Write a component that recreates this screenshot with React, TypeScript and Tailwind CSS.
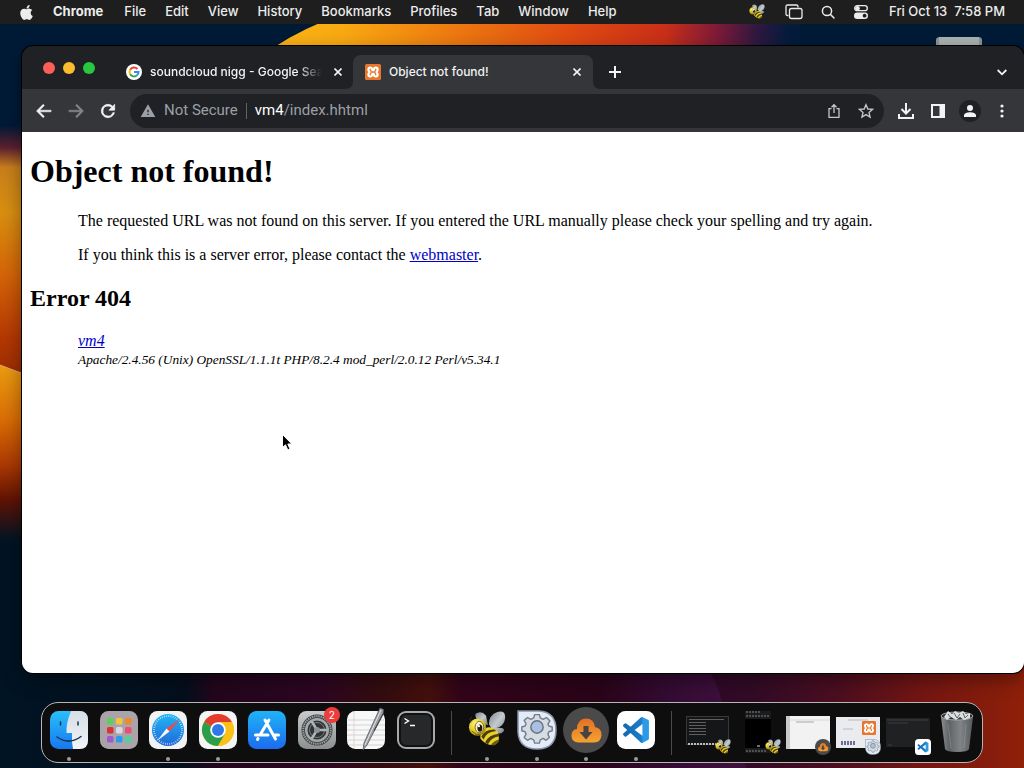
import React from "react";

const UI = "font-['Inter','Liberation_Sans',sans-serif]";

function Wallpaper() {
  return (
    <svg className="absolute inset-0 h-full w-full" viewBox="0 0 1024 768" preserveAspectRatio="none" aria-hidden="true">
      <defs>
        <linearGradient id="top" x1="270" x2="790" y1="0" y2="0" gradientUnits="userSpaceOnUse">
          <stop offset="0" stopColor="#fdb515" />
          <stop offset="0.14" stopColor="#f9a912" />
          <stop offset="0.35" stopColor="#ee7a10" />
          <stop offset="0.58" stopColor="#e04a12" />
          <stop offset="0.76" stopColor="#c92f18" />
          <stop offset="0.86" stopColor="#7e1a38" />
          <stop offset="0.94" stopColor="#2c1840" />
          <stop offset="1" stopColor="#031c3c" />
        </linearGradient>
        <linearGradient id="left" x1="0" x2="0" y1="125" y2="375" gradientUnits="userSpaceOnUse">
          <stop offset="0" stopColor="#001a36" />
          <stop offset="0.09" stopColor="#5c2030" />
          <stop offset="0.17" stopColor="#c87f1c" />
          <stop offset="0.35" stopColor="#d88f10" />
          <stop offset="0.6" stopColor="#d46408" />
          <stop offset="0.85" stopColor="#b53803" />
          <stop offset="1" stopColor="#9a2c02" />
        </linearGradient>
        <linearGradient id="leftLow" x1="0" x2="0" y1="365" y2="545" gradientUnits="userSpaceOnUse">
          <stop offset="0" stopColor="#eb9c10" />
          <stop offset="0.3" stopColor="#da6e06" />
          <stop offset="0.55" stopColor="#ad3a03" />
          <stop offset="0.75" stopColor="#601304" />
          <stop offset="0.95" stopColor="#0a1420" />
          <stop offset="1" stopColor="#001423" />
        </linearGradient>
        <linearGradient id="bottom" x1="0" x2="1024" y1="0" y2="0" gradientUnits="userSpaceOnUse">
          <stop offset="0" stopColor="#001423" />
          <stop offset="0.18" stopColor="#040f1c" />
          <stop offset="0.21" stopColor="#23061c" />
          <stop offset="0.31" stopColor="#2c0622" />
          <stop offset="0.37" stopColor="#330c10" />
          <stop offset="0.42" stopColor="#43100c" />
          <stop offset="0.45" stopColor="#32041a" />
          <stop offset="0.58" stopColor="#2a0418" />
          <stop offset="0.66" stopColor="#2a0828" />
          <stop offset="0.74" stopColor="#330b26" />
          <stop offset="0.82" stopColor="#4c0e20" />
          <stop offset="0.9" stopColor="#741612" />
          <stop offset="1" stopColor="#8f2009" />
        </linearGradient>
        <linearGradient id="petal" x1="600" x2="722" y1="0" y2="0" gradientUnits="userSpaceOnUse">
          <stop offset="0" stopColor="#4a1550" stopOpacity="0" />
          <stop offset="1" stopColor="#4a1550" stopOpacity=".5" />
        </linearGradient>
      </defs>
      <rect width="1024" height="768" fill="#001a36" />
      <path d="M262 56Q288 36 322 22H800V56Z" fill="url(#top)" />
      <rect y="125" width="40" height="255" fill="url(#left)" />
      <path d="M0 365L22 373L40 380V545H0Z" fill="url(#leftLow)" />
      <path d="M0 365L22 373.500" stroke="#e6a070" strokeWidth="1" />
      <rect y="545" width="1024" height="223" fill="url(#bottom)" />
      <path d="M600 660H700Q718 680 722 702Q740 730 746 768H600Z" fill="url(#petal)" />
      <path d="M936 50V40Q936 37 940 37H978Q982 37 982 40V50Z" fill="#8d9698" />
      <path d="M939 46V37H979V46Z" fill="#aab3b2" />
    </svg>
  );
}

function Bee() {
  return (
    <svg viewBox="0 0 40 40" className="h-full w-full" aria-hidden="true">
      <defs>
        <linearGradient id="wing" x1="0" x2="1" y1="0" y2="1">
          <stop offset="0" stopColor="#7b8489" />
          <stop offset=".5" stopColor="#c3cbd0" />
          <stop offset="1" stopColor="#788086" />
        </linearGradient>
        <radialGradient id="beeHead" cx=".4" cy=".3" r=".7">
          <stop offset="0" stopColor="#fff58a" />
          <stop offset=".6" stopColor="#e6cc22" />
          <stop offset="1" stopColor="#a18812" />
        </radialGradient>
      </defs>
      <path d="M8 3Q14 -1 19 5L21 15L13 12Q7 8 8 3Z" fill="url(#wing)" />
      <path d="M22 14Q22 4 31 1Q40 -1 39 8Q38 16 30 18Q37 17 38 20Q36 26 27 22Z" fill="url(#wing)" />
      <path d="M13 22Q22 13 31 21Q35 31 29 35Q20 38 13 29Z" fill="#ecd02a" />
      <path d="M14 27Q18 19 28 19.500L29.500 21Q19 22 16.500 30ZM18 33Q22 25 32 24L32.800 26.500Q24 28 21 35Z" fill="#4a3f0c" />
      <path d="M24 36Q27 31 33 30L32 33L28 36Z" fill="#6d5c10" />
      <circle cx="10" cy="17" r="9" fill="url(#beeHead)" />
      <ellipse cx="12" cy="17" rx="4.500" ry="6" fill="#f8f5df" stroke="#7a6717" />
      <ellipse cx="12.500" cy="18" rx="2.600" ry="3.800" fill="#211804" />
      <circle cx="11.500" cy="16" r="1.200" fill="#fff" />
      <path d="M4 21Q8 26 13 25" fill="none" stroke="#75600a" />
      <path d="M3 12Q1 8 4 6" fill="none" stroke="#3a3208" />
    </svg>
  );
}

function Xampp() {
  return (
    <svg viewBox="0 0 16 16" className="h-full w-full" aria-hidden="true">
      <rect width="16" height="16" rx="1.500" fill="#e8762c" />
      <g fill="#fff">
        <circle cx="5.200" cy="5.400" r="2.900" />
        <circle cx="10.800" cy="5.400" r="2.900" />
        <circle cx="5.200" cy="10.600" r="2.900" />
        <circle cx="10.800" cy="10.600" r="2.900" />
        <rect x="4" y="6.200" width="8" height="3.600" />
      </g>
      <path d="M5.300 5.200V6.200L6.500 8L5.300 9.800V10.800M10.700 5.200V6.200L9.500 8L10.700 9.800V10.800M6.500 8H9.500" fill="none" stroke="#e8762c" strokeWidth="1.300" strokeLinecap="round" />
    </svg>
  );
}

function GoogleG() {
  return (
    <svg viewBox="0 0 16 16" className="size-4 shrink-0" aria-hidden="true">
      <circle cx="8" cy="8" r="8" fill="#fff" />
      <g fill="none" strokeWidth="2">
        <path d="M11.400 5A4.500 4.500 0 0 0 4.200 5.700" stroke="#ea4335" />
        <path d="M4.200 5.700A4.500 4.500 0 0 0 4.200 10.300" stroke="#fbbc05" />
        <path d="M4.200 10.300A4.500 4.500 0 0 0 11 11.300" stroke="#34a853" />
        <path d="M11 11.300A4.500 4.500 0 0 0 12.500 8H8" stroke="#4285f4" />
      </g>
    </svg>
  );
}

const MENUS = ["File", "Edit", "View", "History", "Bookmarks", "Profiles", "Tab", "Window", "Help"];

function MenuBar() {
  return (
    <header className={`relative flex h-6 shrink-0 items-center justify-between bg-[#1e1e1e] pr-[19px] pl-5 text-[13px] font-medium text-[#ececec] ${UI}`}>
      <nav aria-label="Menu bar" className="flex items-center gap-[19px] whitespace-nowrap">
        <button aria-label="Apple menu" className="h-[17px] w-3">
          <svg viewBox="0 0 384 512" className="h-[17px] w-[13px]" fill="currentColor" aria-hidden="true">
            <path d="M318.700 268.700c-.2-36.700 16.400-64.400 50-84.800-18.800-26.900-47.200-41.700-84.700-44.600-35.500-2.800-74.300 20.700-88.500 20.700-15 0-49.400-19.700-76.400-19.700C63.300 141.200 4 184.800 4 273.500q0 39.300 14.400 81.200c12.800 36.700 59 126.700 107.200 125.200 25.200-.6 43-17.900 75.800-17.900 31.800 0 48.300 17.900 76.400 17.900 48.600-.7 90.400-82.500 102.600-119.300-65.200-30.700-61.700-90-61.700-91.900zm-56.600-164.200c27.300-32.400 24.800-61.900 24-72.500-24.100 1.400-52 16.400-67.900 34.900-17.500 19.800-27.800 44.300-25.600 71.900 26.100 2 49.900-11.400 69.500-34.300z" />
          </svg>
        </button>
        <button className="px-[2px] font-bold">Chrome</button>
        {MENUS.map((m) => (
          <button key={m}>{m}</button>
        ))}
      </nav>
      <div className="flex items-center gap-[17px] whitespace-nowrap">
        <button aria-label="Bee menu" className="mr-[3px] size-4"><Bee /></button>
        <button aria-label="Windows">
          <svg viewBox="0 0 18 16" className="h-4 w-[18px]" fill="none" stroke="currentColor" strokeWidth="1.300" aria-hidden="true">
            <path d="M3.500 11.500H2.500Q1 11.500 1 10V2.500Q1 1 2.500 1H11.500Q13 1 13 2.500V3.500" />
            <rect x="4.500" y="4.500" width="12.500" height="10" rx="2" />
          </svg>
        </button>
        <button aria-label="Search">
          <svg viewBox="0 0 16 16" className="size-4" fill="none" stroke="currentColor" strokeWidth="1.500" strokeLinecap="round" aria-hidden="true">
            <circle cx="7" cy="7" r="4.600" />
            <path d="M10.500 10.500L14 14" />
          </svg>
        </button>
        <button aria-label="Control Center">
          <svg viewBox="0 0 16 16" className="size-4" aria-hidden="true">
            <rect x="1.700" y="1.700" width="12.600" height="5" rx="2.500" fill="none" stroke="currentColor" strokeWidth="1.300" />
            <circle cx="4.500" cy="4.200" r="2.300" fill="currentColor" />
            <rect x="1" y="8.500" width="14" height="6.500" rx="3.200" fill="currentColor" />
            <circle cx="11.600" cy="11.700" r="1.900" fill="#1e1e1e" />
          </svg>
        </button>
        <time className="ml-[3px] whitespace-pre">Fri Oct 13  7:58 PM</time>
      </div>
    </header>
  );
}

function Close() {
  return (
    <svg viewBox="0 0 8 8" className="size-2" stroke="#f1f3f4" strokeWidth="1.600" aria-hidden="true">
      <path d="M.5 .5L7.500 7.500M7.500 .5L.5 7.500" />
    </svg>
  );
}

function TabStrip() {
  return (
    <div className="flex h-[43px] shrink-0 items-end pl-[21px]">
      <div className="flex gap-2 self-start pt-4">
        <button aria-label="Close window" className="size-3 rounded-full bg-[#fb5f57]" />
        <button aria-label="Minimize window" className="size-3 rounded-full bg-[#fbbd2e]" />
        <button aria-label="Zoom window" className="size-3 rounded-full bg-[#27c840]" />
      </div>
      <div role="tablist" aria-label="Tabs" className="ml-[19px] flex text-xs font-medium text-[#f1f3f4]">
        <div className="flex h-[34px] w-[239px] items-center pr-[11px] pl-3">
          <GoogleG />
          <button role="tab" aria-selected="false" className="mr-3 ml-2 min-w-0 flex-1 overflow-hidden text-left whitespace-nowrap [mask-image:linear-gradient(to_right,black_86%,transparent)]">
            soundcloud nigg - Google Search
          </button>
          <button aria-label="Close tab"><Close /></button>
        </div>
        <div className="relative flex h-[34px] w-60 items-center rounded-t-lg bg-[#35363a] pr-3 pl-3">
          <svg viewBox="0 0 8 8" className="absolute bottom-0 -left-2 size-2" fill="#35363a" aria-hidden="true"><path d="M8 0V8H0Q8 8 8 0Z" /></svg>
          <svg viewBox="0 0 8 8" className="absolute -right-2 bottom-0 size-2" fill="#35363a" aria-hidden="true"><path d="M0 0V8H8Q0 8 0 0Z" /></svg>
          <span className="size-4 shrink-0"><Xampp /></span>
          <button role="tab" aria-selected="true" className="ml-2 flex-1 text-left">Object not found!</button>
          <button aria-label="Close tab"><Close /></button>
        </div>
      </div>
      <button aria-label="New tab" className="mb-[11px] ml-4">
        <svg viewBox="0 0 12 12" className="size-3" stroke="#f1f3f4" strokeWidth="2" aria-hidden="true"><path d="M6 0V12M0 6H12" /></svg>
      </button>
      <button aria-label="Search tabs" className="mr-[17px] mb-3 ml-auto">
        <svg viewBox="0 0 10 10" className="size-[10px]" fill="none" stroke="#f1f3f4" strokeWidth="1.800" aria-hidden="true"><path d="M.7 3L5 7.300L9.300 3" /></svg>
      </button>
    </div>
  );
}

function Toolbar() {
  return (
    <div className="flex h-[43px] shrink-0 items-center bg-[#35363a] pr-[13px] pl-3 text-[#f1f3f4]">
      <div className="flex gap-3">
        <button aria-label="Back">
          <svg viewBox="0 0 24 24" className="size-5" fill="currentColor" stroke="currentColor" strokeWidth=".6" aria-hidden="true"><path d="M20.500 11H6.830l5.590-5.590L11 4l-8 8 8 8 1.410-1.410L6.830 13H20.500z" /></svg>
        </button>
        <button aria-label="Forward" className="text-[#85868a]">
          <svg viewBox="0 0 24 24" className="size-5" fill="currentColor" stroke="currentColor" strokeWidth=".6" aria-hidden="true"><path d="M3.500 11H17.170l-5.590-5.590L13 4l8 8-8 8-1.410-1.410L17.170 13H3.500z" /></svg>
        </button>
        <button aria-label="Reload">
          <svg viewBox="0 0 24 24" className="size-5" fill="currentColor" stroke="currentColor" strokeWidth=".8" aria-hidden="true"><path d="M17.650 6.350A7.960 7.960 0 0 0 12 4a8 8 0 1 0 7.730 10h-2.080A6 6 0 1 1 12 6c1.660 0 3.140.69 4.220 1.780L13 11h7V4z" /></svg>
        </button>
      </div>
      <div className="ml-3 flex h-[34px] min-w-0 flex-1 items-center rounded-full bg-[#202124] pr-[10px] pl-[10px] font-['Roboto','Liberation_Sans',sans-serif] text-[15px] text-[#9aa0a6]">
        <svg viewBox="0 0 24 24" className="size-4 shrink-0" fill="currentColor" aria-hidden="true"><path d="M1 21h22L12 2 1 21zm12-3h-2v-2h2v2zm0-4h-2v-4h2v4z" /></svg>
        <button className="ml-2 whitespace-nowrap">Not Secure</button>
        <span className="mx-2 h-4 w-px bg-[#5f6368]" />
        <div className="min-w-0 flex-1">
          <a href="http://vm4/index.hhtml" className="whitespace-nowrap"><span className="text-white">vm4</span>/index.hhtml</a>
        </div>
        <button aria-label="Share" className="mr-4">
          <svg viewBox="0 0 16 16" className="size-4" fill="none" stroke="#c4c7cb" strokeWidth="1.300" aria-hidden="true"><path d="M5.500 5.700H3V14.300H13V5.700H10.500M8 10V2M5.500 4.300L8 1.700L10.500 4.300" /></svg>
        </button>
        <button aria-label="Bookmark this page">
          <svg viewBox="0 0 24 24" className="size-4" fill="none" stroke="#c4c7cb" strokeWidth="2" aria-hidden="true"><path d="M12 2.500L14.800 9L21.800 9.600L16.500 14.200L18.100 21.100L12 17.400L5.900 21.100L7.500 14.200L2.200 9.600L9.200 9Z" /></svg>
        </button>
      </div>
      <div className="ml-[13px] flex items-center gap-[14px]">
        <button aria-label="Downloads">
          <svg viewBox="0 0 18 18" className="size-[18px]" fill="none" stroke="currentColor" strokeWidth="2" aria-hidden="true"><path d="M9 1V11M4.500 7L9 11.500L13.500 7M2 12V16H16V12" /></svg>
        </button>
        <button aria-label="Side panel" className="px-px">
          <svg viewBox="0 0 16 16" className="size-4" aria-hidden="true"><path d="M1 1H15V15H1ZM3 3V13H9.500V3Z" fillRule="evenodd" fill="currentColor" /></svg>
        </button>
        <button aria-label="Profile" className="-mx-[2px] flex size-[22px] items-center justify-center rounded-full bg-[#202124]">
          <svg viewBox="0 0 14 14" className="size-[14px]" fill="currentColor" aria-hidden="true"><circle cx="7" cy="4" r="3" /><path d="M1 13V11.500C1 9 5 8.300 7 8.300S13 9 13 11.500V13Z" /></svg>
        </button>
        <button aria-label="Chrome menu" className="px-1">
          <svg viewBox="0 0 10 16" className="h-4 w-[10px]" fill="currentColor" aria-hidden="true"><circle cx="5" cy="3" r="1.600" /><circle cx="5" cy="8" r="1.600" /><circle cx="5" cy="13" r="1.600" /></svg>
        </button>
      </div>
    </div>
  );
}

function Page() {
  return (
    <main className="flex-1 bg-white px-2 pt-[21px] font-['Liberation_Serif',serif] text-base leading-[18px] text-black">
      <h1 className="text-[32px] leading-9 font-bold">Object not found!</h1>
      <p className="mt-[23px] ml-12">The requested URL was not found on this server. If you entered the URL manually please check your spelling and try again.</p>
      <p className="mt-4 ml-12">If you think this is a server error, please contact the <a href="mailto:you@example.com" className="text-[#0000c8] underline">webmaster</a>.</p>
      <h2 className="mt-5 text-2xl leading-7 font-bold">Error 404</h2>
      <address className="mt-5 ml-12">
        <a href="/" className="text-[#0000c8] underline">vm4</a>
        <br />
        <span className="[font-size:smaller]">Apache/2.4.56 (Unix) OpenSSL/1.1.1t PHP/8.2.4 mod_perl/2.0.12 Perl/v5.34.1</span>
      </address>
    </main>
  );
}

function FinderIcon() {
  return (
    <svg viewBox="0 0 38 38" className="size-[38px]" aria-hidden="true">
      <defs>
        <linearGradient id="fb" x1="0" x2="0" y1="0" y2="1"><stop offset="0" stopColor="#28c0fb" /><stop offset="1" stopColor="#1877ee" /></linearGradient>
        <linearGradient id="fw" x1="0" x2="0" y1="0" y2="1"><stop offset="0" stopColor="#d5dde6" /><stop offset="1" stopColor="#f3f5f8" /></linearGradient>
      </defs>
      <rect width="38" height="38" rx="8.500" fill="url(#fb)" />
      <path d="M21 0H29.500Q38 0 38 8.500V29.500Q38 38 29.500 38H23Q21.500 31 22 22H16.500Q16 12 21 0Z" fill="url(#fw)" />
      <path d="M7 26Q19 34.500 31 25.500" fill="none" stroke="#14324f" strokeWidth="1.500" strokeLinecap="round" />
      <path d="M10.500 11V14M28 11V14" stroke="#14324f" strokeWidth="1.500" strokeLinecap="round" />
    </svg>
  );
}

const PADS = ["#5bd05a", "#f5c43a", "#ee8a2a", "#d93335", "#d8dadf", "#ec4d72", "#a259cc", "#2c9af0", "#55cf9c"];

function LaunchpadIcon() {
  return (
    <svg viewBox="0 0 38 38" className="size-[38px]" aria-hidden="true">
      <rect width="38" height="38" rx="8.500" fill="#aaa4a8" />
      {PADS.map((c, i) => (
        <rect key={c} x={7 + (i % 3) * 9} y={7 + Math.floor(i / 3) * 9} width="6.500" height="6.500" rx="1.500" fill={c} />
      ))}
    </svg>
  );
}

function SafariIcon() {
  return (
    <svg viewBox="0 0 38 38" className="size-[38px]" aria-hidden="true">
      <defs><linearGradient id="sb" x1="0" x2="0" y1="0" y2="1"><stop offset="0" stopColor="#21b6f5" /><stop offset="1" stopColor="#2168d8" /></linearGradient></defs>
      <rect width="38" height="38" rx="8.500" fill="#f1f2f4" />
      <circle cx="19" cy="19" r="16" fill="url(#sb)" />
      <circle cx="19" cy="19" r="14" fill="none" stroke="#d6ecfb" strokeWidth="1.800" strokeDasharray=".7 1.500" />
      <path d="M31 8L17.500 17.500L20.500 20.500Z" fill="#ef4b45" />
      <path d="M8 30L17.500 17.500L20.500 20.500Z" fill="#f5f7f9" />
    </svg>
  );
}

function ChromeIcon() {
  return (
    <svg viewBox="0 0 38 38" className="size-[38px]" aria-hidden="true">
      <rect width="38" height="38" rx="8.500" fill="#f4f4f4" />
      <circle cx="19" cy="19" r="16" fill="#fbc116" />
      <path d="M19 19L5.140 11A16 16 0 0 1 32.860 11Z" fill="#e33b2e" />
      <path d="M5.140 11A16 16 0 0 0 19 35L26 23L19 19Z" fill="#2b9e4b" />
      <path d="M19 11H32.860A16 16 0 0 1 19 35L26 23Z" fill="#fbc116" />
      <circle cx="19" cy="19" r="7.800" fill="#fff" />
      <circle cx="19" cy="19" r="6" fill="#2f78e8" />
    </svg>
  );
}

function AppStoreIcon() {
  return (
    <svg viewBox="0 0 38 38" className="size-[38px]" aria-hidden="true">
      <defs><linearGradient id="as" x1="0" x2="0" y1="0" y2="1"><stop offset="0" stopColor="#20b3f8" /><stop offset="1" stopColor="#1c6bee" /></linearGradient></defs>
      <rect width="38" height="38" rx="8.500" fill="url(#as)" />
      <g stroke="#fff" strokeWidth="3" strokeLinecap="round">
        <path d="M17 9L27.500 28M21 9L12 24M7.500 24H20M26 24H30.500M10 27.500L9.500 28.500" />
      </g>
    </svg>
  );
}

function SettingsIcon() {
  return (
    <svg viewBox="0 0 38 38" className="size-[38px]" aria-hidden="true">
      <defs><linearGradient id="st" x1="0" x2="0" y1="0" y2="1"><stop offset="0" stopColor="#c8cbcb" /><stop offset="1" stopColor="#8d9090" /></linearGradient></defs>
      <rect width="38" height="38" rx="8.500" fill="url(#st)" />
      <circle cx="19" cy="19" r="15.500" fill="#3c4042" />
      <circle cx="19" cy="19" r="13.800" fill="none" stroke="#9da1a2" strokeWidth="2" strokeDasharray="1.400 .8" />
      <circle cx="19" cy="19" r="10.800" fill="#303436" stroke="#a5a9aa" strokeWidth="2.500" />
      <circle cx="19" cy="19" r="7.500" fill="none" stroke="#777c7e" strokeWidth="1" />
      <path d="M19 19H29M19 19L13.500 10M19 19L13.500 28" stroke="#b0b4b5" strokeWidth="2.500" />
      <circle cx="19" cy="19" r="3" fill="#8f9496" />
    </svg>
  );
}

function TextEditIcon() {
  return (
    <svg viewBox="0 0 38 38" className="size-[38px] overflow-visible" aria-hidden="true">
      <rect width="38" height="38" rx="8.500" fill="#f8f8f8" />
      <path d="M1 9H37M0 14H38M0 19H38M0 24H38M0 29H38M2 34H36" stroke="#c9c9cc" strokeWidth=".8" />
      <path d="M7 0V38" stroke="#dcc8c8" strokeWidth=".7" />
      <path d="M33 -3L36.500 -1.500L36 3L20 34L16 39L17 32Z" fill="#9da0a4" stroke="#55585c" strokeWidth=".8" />
      <path d="M34 -1L18 34" stroke="#e4e6e8" strokeWidth="1" />
      <path d="M36 3L27 20" stroke="#44474b" strokeWidth="1.200" />
    </svg>
  );
}

function TerminalIcon() {
  return (
    <svg viewBox="0 0 38 38" className="size-[38px]" aria-hidden="true">
      <rect x="1" y="1" width="36" height="36" rx="8" fill="#101112" stroke="#a6a8aa" strokeWidth="2" />
      <rect x="4" y="4" width="30" height="30" rx="5" fill="#272829" />
      <path d="M7.500 7.500L11.500 10L7.500 12.500M13 14.500H18" fill="none" stroke="#fff" strokeWidth="1.400" />
    </svg>
  );
}

const GEAR =
  "M17.500 7H22.500L23.500 10.500L26.500 12L30 10L33.500 13.500L31.500 17L32.500 19L36 20V24L32.500 25L31.500 27.500L33 31L29.500 34L26.500 32L23.500 33.500L22.500 37H17.500L16.500 33.500L13.500 32L10 34L6.500 31L8.500 27.500L7.500 25L4 24V20L7.500 19L8.500 16.500L6.500 13L10 10L13.500 12L16.500 10.500Z";

function GearIcon() {
  return (
    <svg viewBox="0 0 40 40" className="h-full w-full" aria-hidden="true">
      <path d="M1 1H22Q39 2 39 20Q39 39 20 39Q2 39 1 22Z" fill="#e3ebf9" stroke="#8994a6" strokeWidth="1.500" />
      <g transform="translate(1 -2) scale(.95)">
        <path d={GEAR} fill="#d7dbe2" stroke="#747d8b" strokeWidth="1.500" strokeLinejoin="round" />
        <circle cx="20" cy="20" r="6.500" fill="#a9c0e2" stroke="#667181" strokeWidth="1.500" />
      </g>
    </svg>
  );
}

function CloudIcon() {
  return (
    <svg viewBox="0 0 46 46" className="h-full w-full" aria-hidden="true">
      <defs><linearGradient id="cl" x1="0" x2="0" y1="0" y2="1"><stop offset="0" stopColor="#e36f24" /><stop offset="1" stopColor="#f4a331" /></linearGradient></defs>
      <circle cx="23" cy="23" r="23" fill="#4b4a4a" />
      <path d="M15 35.500Q8 35 8.500 28Q9 22.500 14 22Q14 12 23 11.500Q31 11.500 32 20Q38.500 21 38.500 28Q38 35.500 31 35.500Z" fill="url(#cl)" />
      <path d="M20.500 19H25.500V25H29.500L23 32.500L16.500 25H20.500Z" fill="#474342" />
    </svg>
  );
}

function CodeIcon() {
  return (
    <svg viewBox="0 0 38 38" className="h-full w-full" aria-hidden="true">
      <defs><linearGradient id="vs" x1="0" x2="1" y1="0" y2="0"><stop offset="0" stopColor="#1468ae" /><stop offset=".7" stopColor="#1b7cc8" /><stop offset=".78" stopColor="#2b9be8" /><stop offset="1" stopColor="#2b9be8" /></linearGradient></defs>
      <rect width="38" height="38" rx="8.500" fill="#fff" />
      <path transform="translate(6 6) scale(1.080)" fill="url(#vs)" d="M23.150 2.587L18.210.21a1.494 1.494 0 0 0-1.705.29l-9.460 8.630-4.120-3.128a.999.999 0 0 0-1.276.057L.327 7.261A1 1 0 0 0 .326 8.740L3.899 12 .326 15.260a1 1 0 0 0 .001 1.479L1.650 17.940a.999.999 0 0 0 1.276.057l4.120-3.128 9.460 8.630a1.492 1.492 0 0 0 1.704.29l4.942-2.377A1.500 1.500 0 0 0 24 20.060V3.939a1.500 1.500 0 0 0-.85-1.352zm-5.146 14.861L10.826 12l7.178-5.448v10.896z" />
    </svg>
  );
}

function TrashIcon() {
  return (
    <svg viewBox="0 0 34 44" className="h-11 w-[34px]" aria-hidden="true">
      <defs><linearGradient id="tr" x1="0" x2="1" y1="0" y2="0"><stop offset="0" stopColor="#8b8f91" /><stop offset=".25" stopColor="#5f6365" /><stop offset=".6" stopColor="#808486" /><stop offset="1" stopColor="#555a5c" /></linearGradient></defs>
      <path d="M1 6L5 38Q6 41 17 41T29 38L33 6Z" fill="url(#tr)" />
      <ellipse cx="17" cy="5" rx="16" ry="4" fill="#2e3133" stroke="#a6aaac" />
      <path d="M4 6L8 0L12 3L15 0L19 2L23 0L26 3L30 2L30 7L24 9L20 6L16 9L11 6L7 9Z" fill="#dcdfe0" />
      <path d="M8 3L11 7M14 2L17 7L20 3M23 2L25 7L28 4" stroke="#5b6062" fill="none" />
      <path d="M8 13L11 37M26 13L24 37" stroke="#a3a7a9" opacity=".4" />
    </svg>
  );
}

function DockItem({ label, running, children }: { label: string; running?: boolean; children: React.ReactNode }) {
  return (
    <button aria-label={label} className="relative flex h-[59px] w-[38px] shrink-0 items-center justify-center pb-[5px]">
      {children}
      {running && <span className="absolute bottom-px left-[17px] size-1 rounded-full bg-[#9b9b9b]" />}
    </button>
  );
}

function Thumb({ label, badge, children }: { label: string; badge: React.ReactNode; children: React.ReactNode }) {
  return (
    <button aria-label={label} className="relative flex h-11 w-11 shrink-0 items-center justify-center">
      {children}
      <span className="absolute -right-px bottom-0 size-4">{badge}</span>
    </button>
  );
}

function Dock() {
  return (
    <footer className="relative mx-auto mb-[5px] flex h-[61px] w-[942px] max-w-full shrink-0 items-center rounded-[17px] border border-[#b9b5b5] bg-[#0e0e0f] px-2">
      <div className="flex w-[385px] shrink-0 justify-between">
        <DockItem label="Finder" running><FinderIcon /></DockItem>
        <DockItem label="Launchpad"><LaunchpadIcon /></DockItem>
        <DockItem label="Safari" running><SafariIcon /></DockItem>
        <DockItem label="Google Chrome" running><ChromeIcon /></DockItem>
        <DockItem label="App Store"><AppStoreIcon /></DockItem>
        <DockItem label="System Settings">
          <SettingsIcon />
          <span className={`absolute top-1 -right-1 flex size-4 items-center justify-center rounded-full bg-[#ec3c3b] text-[10px] text-white ${UI}`}>2</span>
        </DockItem>
        <DockItem label="TextEdit"><TextEditIcon /></DockItem>
        <DockItem label="Terminal"><TerminalIcon /></DockItem>
      </div>
      <span className="mx-4 h-11 w-px bg-[#4a4a4a]" />
      <div className="flex w-[187px] shrink-0 justify-between">
        <DockItem label="Bee" running><span className="size-[38px] shrink-0"><Bee /></span></DockItem>
        <DockItem label="Script runner" running><span className="size-10 shrink-0"><GearIcon /></span></DockItem>
        <DockItem label="Cloud downloader" running><span className="size-[46px] shrink-0"><CloudIcon /></span></DockItem>
        <DockItem label="Visual Studio Code" running><span className="size-[38px] shrink-0"><CodeIcon /></span></DockItem>
      </div>
      <span className="mr-[14px] ml-4 h-11 w-px bg-[#4a4a4a]" />
      <div className="flex items-center gap-[6px]">
        <Thumb label="Minimized log window" badge={<Bee />}>
          <svg viewBox="0 0 44 44" className="size-11" aria-hidden="true">
            <rect x=".5" y="5.500" width="42" height="28" fill="#151617" stroke="#38393a" />
            <path d="M3 8.500H38M3 11.500H20M3 14.500H20M3 17.500H20M3 20.500H20M3 23.500H20" stroke="#66686a" strokeWidth=".9" />
            <path d="M2 33H30" stroke="#babcbd" strokeWidth="2" strokeDasharray="2 1" />
          </svg>
        </Thumb>
        <Thumb label="Minimized player window" badge={<Bee />}>
          <svg viewBox="0 0 44 44" className="size-11" aria-hidden="true">
            <rect x="9" y="0" width="26" height="42" fill="#1b1c1d" />
            <rect x="9" y="8" width="26" height="29" fill="#000" />
            <path d="M10 1H24M10 5H34M10 40H30" stroke="#606264" strokeWidth="1.500" strokeDasharray="2 1" />
            <path d="M21 35H24" stroke="#ddd" />
          </svg>
        </Thumb>
        <Thumb label="Minimized downloads window" badge={<CloudIcon />}>
          <svg viewBox="0 0 44 44" className="size-11" aria-hidden="true">
            <rect y="5" width="44" height="33" fill="#f2f2f2" />
            <rect y="5" width="4" height="33" fill="#c9cacc" />
            <path d="M4 9H44" stroke="#d8d8d8" /><path d="M10 11H28" stroke="#a8a8a8" />
          </svg>
        </Thumb>
        <Thumb label="Minimized XAMPP window" badge={<GearIcon />}>
          <svg viewBox="0 0 44 44" className="size-11" aria-hidden="true">
            <rect y="6" width="44" height="31" fill="#eaebef" />
            <path d="M12 9H32M7 18H17" stroke="#b8babe" />
            <path d="M5 32H20" stroke="#6d6e96" strokeWidth="4" strokeDasharray="2 1" />
          </svg>
          <span className="absolute top-[10px] right-1 size-[14px]"><Xampp /></span>
        </Thumb>
        <Thumb label="Minimized editor window" badge={<CodeIcon />}>
          <svg viewBox="0 0 44 44" className="size-11" aria-hidden="true">
            <rect y="7" width="44" height="29" fill="#202123" />
            <path d="M1 9H42M2 12H22M2 34H6" stroke="#3c3f43" strokeWidth="1" />
          </svg>
        </Thumb>
        <button aria-label="Trash" className="ml-1 h-11 w-[34px] shrink-0"><TrashIcon /></button>
      </div>
    </footer>
  );
}

export default function App() {
  return (
    <div className="relative flex h-screen flex-col overflow-hidden">
      <Wallpaper />
      <MenuBar />
      <section aria-label="Browser window" className={`relative mt-[22px] mb-[29px] ml-[22px] flex min-h-0 flex-1 flex-col overflow-hidden rounded-[11px] bg-[#202124] shadow-[0_0_0_1px_#000,0_6px_20px_rgba(0,0,0,0.4)] ${UI}`}>
        <TabStrip />
        <Toolbar />
        <Page />
      </section>
      <Dock />
      <svg viewBox="0 0 12 19" className="pointer-events-none absolute top-[433px] left-[281px] h-[19px] w-3" aria-hidden="true">
        <path d="M1.500 1.500V14.500L4.500 11.800L6.800 17L9 16L6.800 11H10.800Z" fill="#000" stroke="#fff" />
      </svg>
    </div>
  );
}
